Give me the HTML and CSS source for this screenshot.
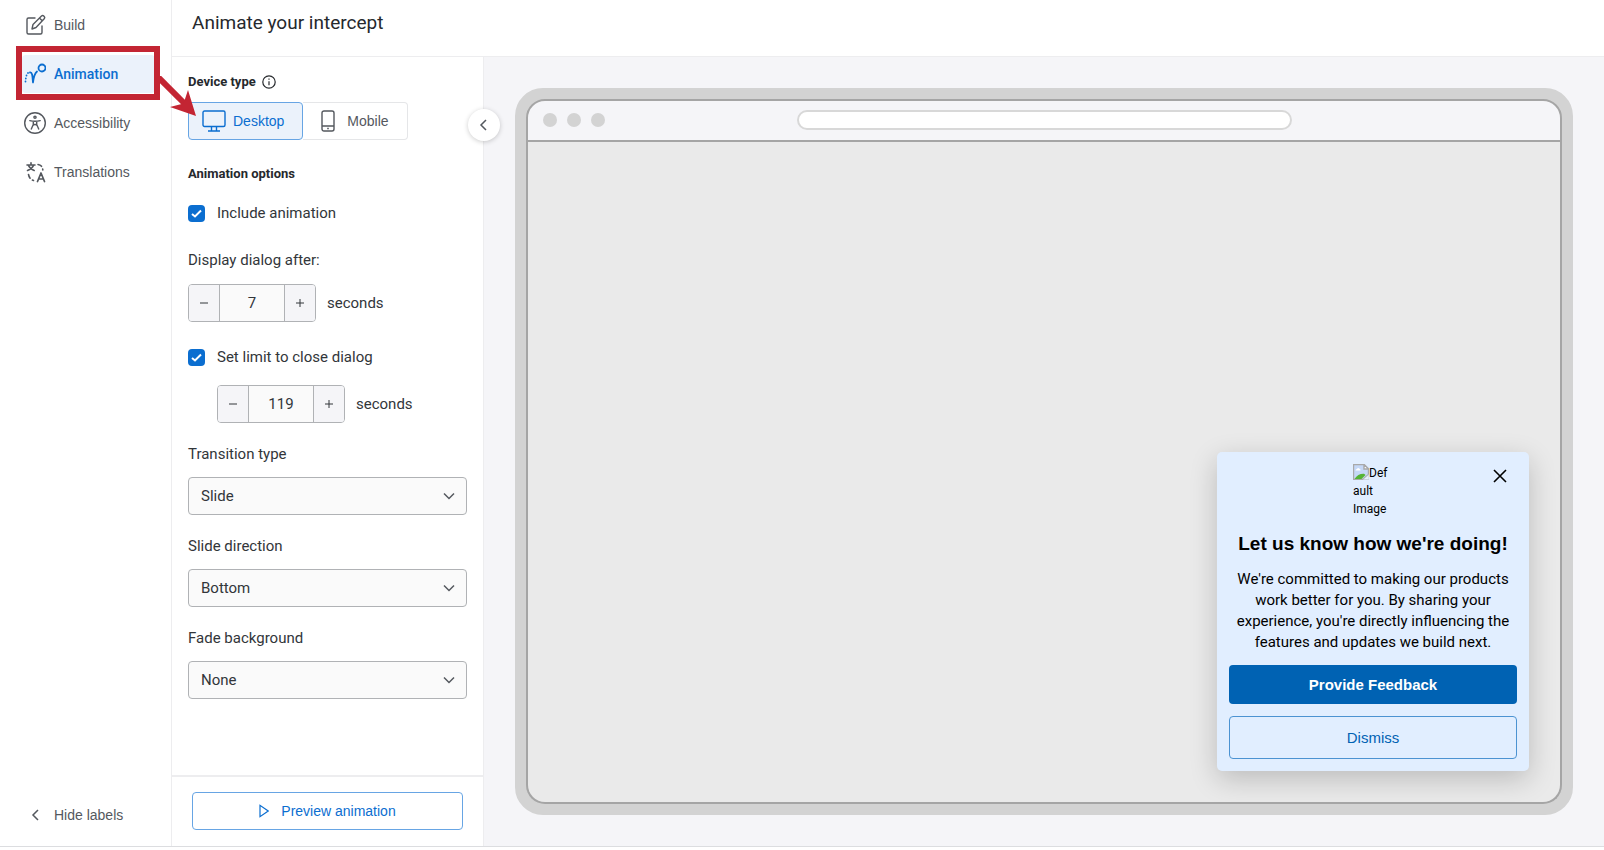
FILE: index.html
```html
<!DOCTYPE html>
<html lang="en">

<head>
    <meta charset="UTF-8">
    <meta name="viewport" content="width=device-width, initial-scale=1.0">
    <title>Animate your intercept</title>
    <link rel="stylesheet" href="styles.css">
</head>

<body>
    <div class="app">
        <nav class="sidebar">
            <ul class="nav-list">
                <li>
                    <a class="nav-item" href="#build">
                        <svg class="nav-icon" viewBox="0 0 22 22">
                            <path d="M11 4H4.500Q3 4 3 5.500V18.500Q3 20 4.500 20H16.500Q18 20 18 18.500V12" />
                            <path d="M8 15l1-4.500L17.500 2q1.200-1 2.500.200t.200 2.500L12 13.500zM15.500 4l2.700 2.700" />
                        </svg>
                        <span>Build</span>
                    </a>
                </li>
                <li>
                    <a class="nav-item active" href="#animation">
                        <svg class="nav-icon" viewBox="0 0 22 22">
                            <path d="M1.500 18.500v.1M1.800 15.500v.1M2.500 12.500v.1M4 10v.1" stroke-width="1.800" />
                            <path d="M6 9.500C8.500 9 8.500 14 9 19.500C9.500 15 10 11 13 8.500" stroke-width="1.800" />
                            <circle cx="18" cy="5" r="3.500" stroke-width="1.800" />
                        </svg>
                        <span>Animation</span>
                    </a>
                </li>
                <li>
                    <a class="nav-item" href="#accessibility">
                        <svg class="nav-icon" viewBox="0 0 22 22">
                            <circle cx="11" cy="11" r="10.300" />
                            <circle cx="11" cy="5.200" r="1.100" />
                            <path d="M5.800 8.600q5.200 1.300 10.400 0M9.300 9.300v3.200L7.300 17M12.700 9.300v3.200L14.700 17M9.300 13l1.700-.7 1.700.7" />
                        </svg>
                        <span>Accessibility</span>
                    </a>
                </li>
                <li>
                    <a class="nav-item" href="#translations">
                        <svg class="nav-icon" viewBox="0 0 22 22">
                            <path d="M3 4h8M7 1.800V4M4.500 4.500Q6 8 10.200 9.500M9.500 4.500Q8 8 3.500 9.500" stroke-width="1.600" />
                            <path d="M13.500 20.500l3.500-8.500L20.500 20.500M14.700 18h4.600" stroke-width="1.700" />
                            <path d="M14 3.500q4.500.8 4.800 5.500M4.500 13.500q.8 4.500 5 6" stroke-width="1.600" stroke-dasharray="4 3" />
                        </svg>
                        <span>Translations</span>
                    </a>
                </li>
            </ul>
            <button class="hide-labels" type="button">
                <svg class="chevron" viewBox="0 0 12 12"><path d="M8 1L3 6l5 5" /></svg>
                <span>Hide labels</span>
            </button>
        </nav>

        <div class="main">
            <header class="header">
                <h1>Animate your intercept</h1>
            </header>

            <div class="content">
                <aside class="panel">
                    <form class="options" id="options">
                        <h2 class="section-title">
                            Device type
                            <svg class="info" viewBox="0 0 14 14">
                                <circle cx="7" cy="7" r="6.200" />
                                <path d="M7 6.200V10.300M7 3.600v1.200" />
                            </svg>
                        </h2>
                        <div class="device-toggle">
                            <button class="device selected" type="button">
                                <svg class="desktop-icon" viewBox="0 0 24 22">
                                    <rect x="1" y="1" width="22" height="15.500" rx="1.500" />
                                    <path d="M9.500 17v3.500M14.500 17v3.500M6 21h12" />
                                </svg>
                                Desktop
                            </button>
                            <button class="device" type="button">
                                <svg class="mobile-icon" viewBox="0 0 14 22">
                                    <rect x="1" y="1" width="12" height="20" rx="2" />
                                    <path d="M1 16h12M6.200 18.500h1.600" />
                                </svg>
                                Mobile
                            </button>
                        </div>

                        <h2 class="section-title animation-title">Animation options</h2>
                        <label class="check-row">
                            <input type="checkbox" checked>
                            Include animation
                        </label>

                        <label class="field-label delay-label" for="delay">Display dialog after:</label>
                        <div class="stepper-row">
                            <div class="stepper">
                                <button type="button" aria-label="Decrease">
                                    <svg viewBox="0 0 8 8"><path d="M0 4h8" /></svg>
                                </button>
                                <input id="delay" type="text" value="7">
                                <button type="button" aria-label="Increase">
                                    <svg viewBox="0 0 8 8"><path d="M0 4h8M4 0v8" /></svg>
                                </button>
                            </div>
                            <span>seconds</span>
                        </div>

                        <label class="check-row limit-row">
                            <input type="checkbox" checked>
                            Set limit to close dialog
                        </label>
                        <div class="stepper-row indented">
                            <div class="stepper">
                                <button type="button" aria-label="Decrease">
                                    <svg viewBox="0 0 8 8"><path d="M0 4h8" /></svg>
                                </button>
                                <input type="text" value="119" aria-label="Close dialog after">
                                <button type="button" aria-label="Increase">
                                    <svg viewBox="0 0 8 8"><path d="M0 4h8M4 0v8" /></svg>
                                </button>
                            </div>
                            <span>seconds</span>
                        </div>

                        <div class="field">
                            <label class="field-label" for="transition">Transition type</label>
                            <div class="select">
                                <select id="transition"><option>Slide</option></select>
                                <svg class="chevron" viewBox="0 0 12 12"><path d="M1 3.500l5 5 5-5" /></svg>
                            </div>
                        </div>
                        <div class="field">
                            <label class="field-label" for="direction">Slide direction</label>
                            <div class="select">
                                <select id="direction"><option>Bottom</option></select>
                                <svg class="chevron" viewBox="0 0 12 12"><path d="M1 3.500l5 5 5-5" /></svg>
                            </div>
                        </div>
                        <div class="field">
                            <label class="field-label" for="fade">Fade background</label>
                            <div class="select">
                                <select id="fade"><option>None</option></select>
                                <svg class="chevron" viewBox="0 0 12 12"><path d="M1 3.500l5 5 5-5" /></svg>
                            </div>
                        </div>
                    </form>

                    <div class="panel-footer">
                        <button class="preview-btn" type="button">
                            <svg viewBox="0 0 10 14"><path d="M1 1.300v11.400L9.200 7z" /></svg>
                            Preview animation
                        </button>
                    </div>

                    <button class="collapse" type="button" aria-label="Collapse panel">
                        <svg class="chevron" viewBox="0 0 12 12"><path d="M8 1L3 6l5 5" /></svg>
                    </button>
                </aside>

                <main class="preview">
                    <div class="browser">
                        <div class="browser-bar">
                            <div class="dots">
                                <span class="dot"></span>
                                <span class="dot"></span>
                                <span class="dot"></span>
                            </div>
                            <div class="address"></div>
                        </div>
                        <div class="viewport">
                            <section class="dialog">
                                <button class="close" type="button" aria-label="Close">
                                    <svg viewBox="0 0 14 14"><path d="M1 1l12 12M13 1L1 13" /></svg>
                                </button>
                                <div class="logo">
                                    <svg class="broken" viewBox="0 0 16 16">
                                        <path d="M.5.500H11L15.500 5v5.500L9.500 15.500H.5z" fill="#c5d8f7" stroke="#a9a9a9" />
                                        <path d="M2.500 6.500q0-1.500 1.500-1.500 .8-1.500 2.200-.5 1.600.3 1.300 2z" fill="#fff" />
                                        <path d="M1.500 15Q5 9.500 11 9.800L12.500 11l-4 4z" fill="#54b435" />
                                        <path d="M11 .5V5h4.500z" fill="#fff" stroke="#a9a9a9" />
                                        <path d="M16 10.500v5H10z" fill="#e6f0fd" stroke="#b9c2cc" stroke-width=".6" />
                                    </svg>Def<br>ault<br>Image
                                </div>
                                <h3>Let us know how we're doing!</h3>
                                <p>We're committed to making our products work better for you. By sharing your experience, you're directly influencing the features and updates we build next.</p>
                                <button class="primary" type="button">Provide Feedback</button>
                                <button class="secondary" type="button">Dismiss</button>
                            </section>
                        </div>
                    </div>
                </main>
            </div>
        </div>
    </div>

    <!-- callout: from the Animation tab to the device toggle -->
    <div class="callout-box"></div>
    <svg class="callout-arrow" viewBox="0 0 44 44">
        <path d="M2 1L31 30" stroke="#c32533" stroke-width="6" />
        <path d="M40 40L14 31 27.500 27.500 32 14z" fill="#c32533" />
    </svg>
</body>

</html>
```
FILE: styles.css
```css
* {
    padding: 0;
    margin: 0;
    box-sizing: border-box;
}

body {
    font: 15px/20px Roboto, "Liberation Sans", sans-serif;
    color: #32363a;
    background: #fff;
}

button,
input,
select {
    font: inherit;
    color: inherit;
}

button {
    cursor: pointer;
}

svg {
    display: block;
    flex: none;
    fill: none;
    stroke: currentColor;
    stroke-width: 1.4;
}

ul {
    list-style: none;
}

.app {
    display: flex;
    height: calc(100vh - 3px);
    border-bottom: 1px solid #dcdde0;
}

/* sidebar */
.sidebar {
    width: 172px;
    flex: none;
    display: flex;
    flex-direction: column;
    justify-content: space-between;
    padding: 6px 16px 21px 22px;
    border-right: 1px solid #ededef;
    color: #54585e;
}

.sidebar,
.device,
.preview-btn {
    font: 14px/20px "Liberation Sans", Arial, sans-serif;
}

.nav-list {
    display: flex;
    flex-direction: column;
    gap: 11px;
}

.nav-item {
    display: flex;
    align-items: center;
    gap: 8px;
    height: 38px;
    padding-left: 2px;
    border-radius: 4px;
    color: inherit;
    text-decoration: none;
}

.nav-item.active {
    color: #0b6ed0;
    background: #ebf2fb;
    font-family: Roboto, "Liberation Sans", sans-serif;
    font-weight: 500;
}

.nav-icon {
    width: 22px;
    height: 22px;
    stroke-linecap: round;
    stroke-linejoin: round;
}

.chevron {
    width: 12px;
    height: 12px;
    stroke-width: 1.5;
    color: #54585e;
}

.hide-labels {
    display: flex;
    align-items: center;
    gap: 12px;
    padding-left: 8px;
    border: 0;
    background: none;
}

/* main */
.main {
    flex: 1;
    min-width: 0;
    display: flex;
    flex-direction: column;
}

.header {
    padding: 11px 20px 21px;
    border-bottom: 1px solid #ededef;
}

.header h1 {
    font-size: 19px;
    line-height: 24px;
    font-weight: 400;
    color: #26292d;
}

.content {
    flex: 1;
    min-height: 0;
    display: flex;
}

.panel {
    position: relative;
    width: 312px;
    flex: none;
    display: flex;
    flex-direction: column;
    border-right: 1px solid #ededef;
}

.options {
    flex: 1;
    padding: 15px 16px;
}

.section-title {
    display: flex;
    align-items: center;
    gap: 6px;
    font-size: 13px;
    line-height: 20px;
    font-weight: 700;
    color: #26292d;
}

.info {
    width: 14px;
    height: 14px;
    stroke-width: 1.2;
}

.device-toggle {
    display: flex;
    margin-top: 10px;
}

.device {
    display: flex;
    align-items: center;
    gap: 7px;
    height: 38px;
    padding: 0 18px 0 13px;
    border: 1px solid #e5e6e8;
    border-left: 0;
    border-radius: 0 4px 4px 0;
    background: #fff;
    color: #54585e;
}

.device.selected {
    border: 1px solid #67a5e4;
    border-radius: 4px;
    background: #ebf2fb;
    color: #0b6ed0;
}

.desktop-icon {
    width: 24px;
    height: 22px;
}

.mobile-icon {
    width: 14px;
    height: 22px;
    margin: 0 5px;
}

.animation-title {
    margin: 24px 0 19px;
}

.check-row {
    display: flex;
    align-items: center;
    gap: 12px;
}

.check-row input {
    appearance: none;
    width: 17px;
    height: 17px;
    border-radius: 4px;
    background: #0b6ed0 url("data:image/svg+xml,%3Csvg xmlns='http://www.w3.org/2000/svg' viewBox='0 0 17 17'%3E%3Cpath d='M4 9l3 2.500 6-6' fill='none' stroke='white' stroke-width='2'/%3E%3C/svg%3E");
}

.field-label {
    display: block;
}

.delay-label {
    margin: 27px 0 14px;
}

.stepper-row {
    display: flex;
    align-items: center;
    gap: 11px;
}

.stepper {
    display: flex;
    width: 128px;
    height: 38px;
    border: 1px solid #b0b2b5;
    border-radius: 4px;
    overflow: hidden;
}

.stepper button {
    flex: none;
    display: flex;
    align-items: center;
    justify-content: center;
    width: 30px;
    border: 0;
    background: #f5f5f8;
}

.stepper svg {
    width: 8px;
    height: 8px;
    stroke-width: 1;
}

.stepper input {
    flex: 1;
    min-width: 0;
    border: 1px solid #b0b2b5;
    border-width: 0 1px;
    background: #fafafa;
    text-align: center;
}

.limit-row {
    margin: 25px 0 18px;
}

.indented {
    padding-left: 29px;
}

.field {
    margin-top: 21px;
}

.select {
    display: grid;
    align-items: center;
    margin-top: 13px;
}

.select > * {
    grid-area: 1 / 1;
}

.select select {
    appearance: none;
    width: 100%;
    height: 38px;
    padding: 0 12px;
    border: 1px solid #b0b2b5;
    border-radius: 4px;
    background: #fafafa;
}

.select .chevron {
    justify-self: end;
    margin-right: 12px;
    pointer-events: none;
}

.panel-footer {
    padding: 15px 20px 16px;
    border-top: 2px solid #ededef;
}

.preview-btn {
    display: flex;
    align-items: center;
    justify-content: center;
    gap: 12px;
    width: 100%;
    height: 38px;
    border: 1px solid #67a5e4;
    border-radius: 4px;
    background: #fff;
    color: #0b6ed0;
}

.preview-btn svg {
    width: 10px;
    height: 14px;
    stroke-width: 1.2;
}

.collapse {
    position: absolute;
    z-index: 1;
    top: 52px;
    right: -17px;
    display: flex;
    align-items: center;
    justify-content: center;
    width: 32px;
    height: 32px;
    border: 0;
    border-radius: 50%;
    background: #fff;
    box-shadow: 0 1px 5px rgba(0, 0, 0, 0.2);
}

/* preview */
.preview {
    flex: 1;
    min-width: 0;
    display: flex;
    padding: 31px;
    background: #f5f5f8;
}

.browser {
    flex: 1;
    display: flex;
    flex-direction: column;
    border: 11px solid #d3d3d3;
    border-radius: 28px;
    background: #d3d3d3;
}

.browser-bar {
    display: grid;
    grid-template-columns: 1fr 495px 1fr;
    align-items: center;
    height: 43px;
    padding: 0 15px 2px;
    border: 2px solid #a5a5a5;
    border-radius: 19px 19px 0 0;
    background: #f5f5f8;
}

.dots {
    display: flex;
    gap: 10px;
}

.dot {
    width: 14px;
    height: 14px;
    border-radius: 50%;
    background: #d3d3d3;
}

.address {
    height: 20px;
    border: 2px solid #d8d8d8;
    border-radius: 10px;
    background: #fff;
}

.viewport {
    flex: 1;
    display: flex;
    align-items: flex-end;
    justify-content: flex-end;
    padding: 31px;
    border: 2px solid #a5a5a5;
    border-top: 0;
    border-radius: 0 0 19px 19px;
    background: #eaeaea;
    overflow: hidden;
}

.dialog {
    position: relative;
    width: 312px;
    padding: 12px;
    border-radius: 5px;
    background: #e1eeff;
    box-shadow: 0 8px 28px rgba(0, 0, 0, 0.2);
    color: #000;
    text-align: center;
}

.close {
    position: absolute;
    top: 17px;
    right: 22px;
    border: 0;
    background: none;
}

.close svg {
    width: 14px;
    height: 14px;
    stroke-width: 1.6;
}

.logo {
    width: 40px;
    margin: 0 auto;
    font-size: 12px;
    line-height: 18px;
    text-align: left;
    white-space: nowrap;
}

.broken {
    display: inline-block;
    width: 16px;
    height: 16px;
    stroke: none;
    vertical-align: top;
}

.dialog h3 {
    margin-top: 14px;
    font: bold 19px/24px "Liberation Sans", Arial, sans-serif;
}

.dialog p {
    margin-top: 13px;
    line-height: 21px;
}

.primary,
.secondary {
    display: block;
    width: 100%;
    border-radius: 4px;
    font-family: "Liberation Sans", Arial, sans-serif;
}

.primary {
    height: 39px;
    margin-top: 12px;
    border: 0;
    background: #0062b3;
    color: #fff;
    font-weight: 700;
}

.secondary {
    height: 43px;
    margin-top: 12px;
    border: 1px solid #4c93d2;
    background: transparent;
    color: #0062b3;
}

/* callout */
.callout-box {
    position: absolute;
    top: 46px;
    left: 16px;
    width: 144px;
    height: 54px;
    border: 6px solid #c32533;
    pointer-events: none;
}

.callout-arrow {
    position: absolute;
    top: 76px;
    left: 156px;
    width: 44px;
    height: 44px;
    stroke: none;
    pointer-events: none;
}
```
